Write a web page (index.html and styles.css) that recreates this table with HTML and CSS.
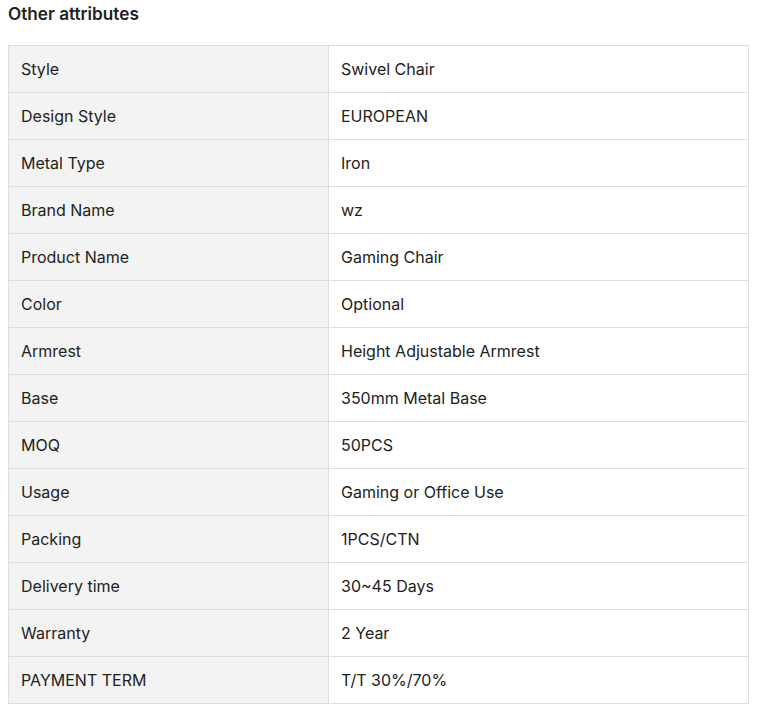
FILE: index.html
```html
<!DOCTYPE html>
<html>
<head>
<meta charset="utf-8">
<link rel="stylesheet" href="styles.css">
</head>
<body>
<h3 class="title">Other attributes</h3>
<table class="attrs">
<tbody>
<tr><td class="k">Style</td><td class="v">Swivel Chair</td></tr>
<tr><td class="k">Design Style</td><td class="v">EUROPEAN</td></tr>
<tr><td class="k">Metal Type</td><td class="v">Iron</td></tr>
<tr><td class="k">Brand Name</td><td class="v">wz</td></tr>
<tr><td class="k">Product Name</td><td class="v">Gaming Chair</td></tr>
<tr><td class="k">Color</td><td class="v">Optional</td></tr>
<tr><td class="k">Armrest</td><td class="v">Height Adjustable Armrest</td></tr>
<tr><td class="k">Base</td><td class="v">350mm Metal Base</td></tr>
<tr><td class="k">MOQ</td><td class="v">50PCS</td></tr>
<tr><td class="k">Usage</td><td class="v">Gaming or Office Use</td></tr>
<tr><td class="k">Packing</td><td class="v">1PCS/CTN</td></tr>
<tr><td class="k">Delivery time</td><td class="v">30~45 Days</td></tr>
<tr><td class="k">Warranty</td><td class="v">2 Year</td></tr>
<tr><td class="k">PAYMENT TERM</td><td class="v">T/T 30%/70%</td></tr>
</tbody>
</table>
</body>
</html>
```
FILE: styles.css
```css
html, body {
  margin: 0;
  padding: 0;
  background: #fff;
}
body {
  padding: 0 8px;
  font-family: Inter, "Noto Sans", sans-serif;
  color: #222;
}
.title {
  margin: 0 0 17px;
  font-size: 17.2px;
  font-weight: 600;
  line-height: 28px;
  color: #222;
}
.attrs {
  width: 741px;
  border-collapse: collapse;
  table-layout: fixed;
}
.attrs td {
  border: 1px solid #ddd;
  padding: 0 12px;
  font-size: 16px;
  line-height: 20px;
  vertical-align: middle;
  box-sizing: border-box;
  height: 47px;
}
.attrs .k {
  width: 320px;
  background: #f3f3f3;
}
.attrs .v {
  background: #fff;
}
```
